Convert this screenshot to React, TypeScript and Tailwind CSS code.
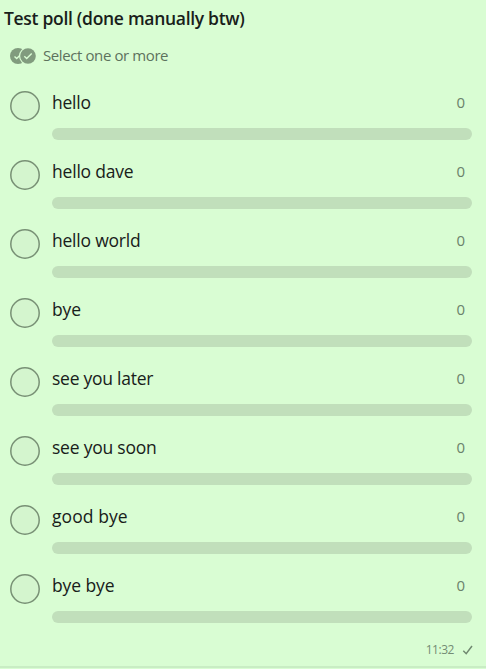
const options: { label: string; votes: number; spacing: string }[] = [
  { label: 'hello', votes: 0, spacing: 'tracking-[-0.25px]' },
  { label: 'hello dave', votes: 0, spacing: 'tracking-[-0.2px]' },
  { label: 'hello world', votes: 0, spacing: 'tracking-[-0.22px]' },
  { label: 'bye', votes: 0, spacing: 'tracking-[-0.15px]' },
  { label: 'see you later', votes: 0, spacing: 'tracking-[-0.25px]' },
  { label: 'see you soon', votes: 0, spacing: 'tracking-[-0.22px]' },
  { label: 'good bye', votes: 0, spacing: 'tracking-[0.08px]' },
  { label: 'bye bye', votes: 0, spacing: 'tracking-[-0.1px]' },
];

function MultiSelectIcon() {
  return (
    <svg className="h-4 w-[26px]" viewBox="0 0 26 16" fill="none">
      <circle cx="8" cy="8" r="8" fill="#819b7e" />
      <path d="M4.5 8.4l2.2 2.2 4.6-4.7" stroke="#d9fdd3" strokeWidth="1.4" />
      <circle cx="18" cy="8" r="9" fill="#d9fdd3" />
      <circle cx="18" cy="8" r="7.8" fill="#819b7e" />
      <path d="M14.3 8.3l2.4 2.3 5-5" stroke="#d9fdd3" strokeWidth="1.4" />
    </svg>
  );
}

function Option({ label, votes, spacing }: { label: string; votes: number; spacing: string }) {
  return (
    <div className="flex h-[69px] pl-[10px] pr-[14px]">
      <svg className="mt-[7px] h-[30px] w-[30px] shrink-0" viewBox="0 0 30 30">
        <circle cx="15" cy="15" r="14.2" fill="#d4f5ce" stroke="#789075" strokeWidth="1.5" />
      </svg>
      <div className="ml-3 flex-1">
        <div className="flex h-11 justify-between pr-[7px]">
          <span className={`pt-[6px] text-[17.5px] leading-6 text-[#18201a] ${spacing}`}>{label}</span>
          <span className="pt-[6px] text-[15px] leading-6 text-[#6b826b]">{votes}</span>
        </div>
        <div className="h-3 rounded-full bg-[#c1dfbb]" />
      </div>
    </div>
  );
}

export default function App() {
  return (
    <main className="flex h-[669px] w-[486px] flex-col overflow-hidden bg-[#d9fdd3] font-['Open_Sans','Noto_Sans',sans-serif]">
      <h1 className="h-[48px] whitespace-nowrap pl-1 pt-[6px] text-[17.5px] font-semibold leading-6 tracking-[-0.3px] text-[#18201a]">
        Test poll (done manually btw)
      </h1>
      <div className="flex h-4 items-center pl-[10px]">
        <MultiSelectIcon />
        <span className="-mt-0.5 ml-[7px] text-[15px] leading-4 tracking-[-0.4px] text-[#5d725d]">Select one or more</span>
      </div>
      <div className="mt-5">
        {options.map((o) => (
          <Option key={o.label} {...o} />
        ))}
      </div>
      <footer className="flex h-[27px] items-center justify-end pr-[12px]">
        <span className="text-[12px] leading-4 tracking-[-0.45px] text-[#748c74]">11:32</span>
        <svg className="ml-2 h-3 w-3" viewBox="0 0 12 12" fill="none">
          <path d="M1.3 6.7l2.9 3L10 2" stroke="#708870" strokeWidth="1.5" />
        </svg>
      </footer>
      <div className="mt-auto h-[3px] border-t-2 border-[#c9edc4]" />
    </main>
  );
}
